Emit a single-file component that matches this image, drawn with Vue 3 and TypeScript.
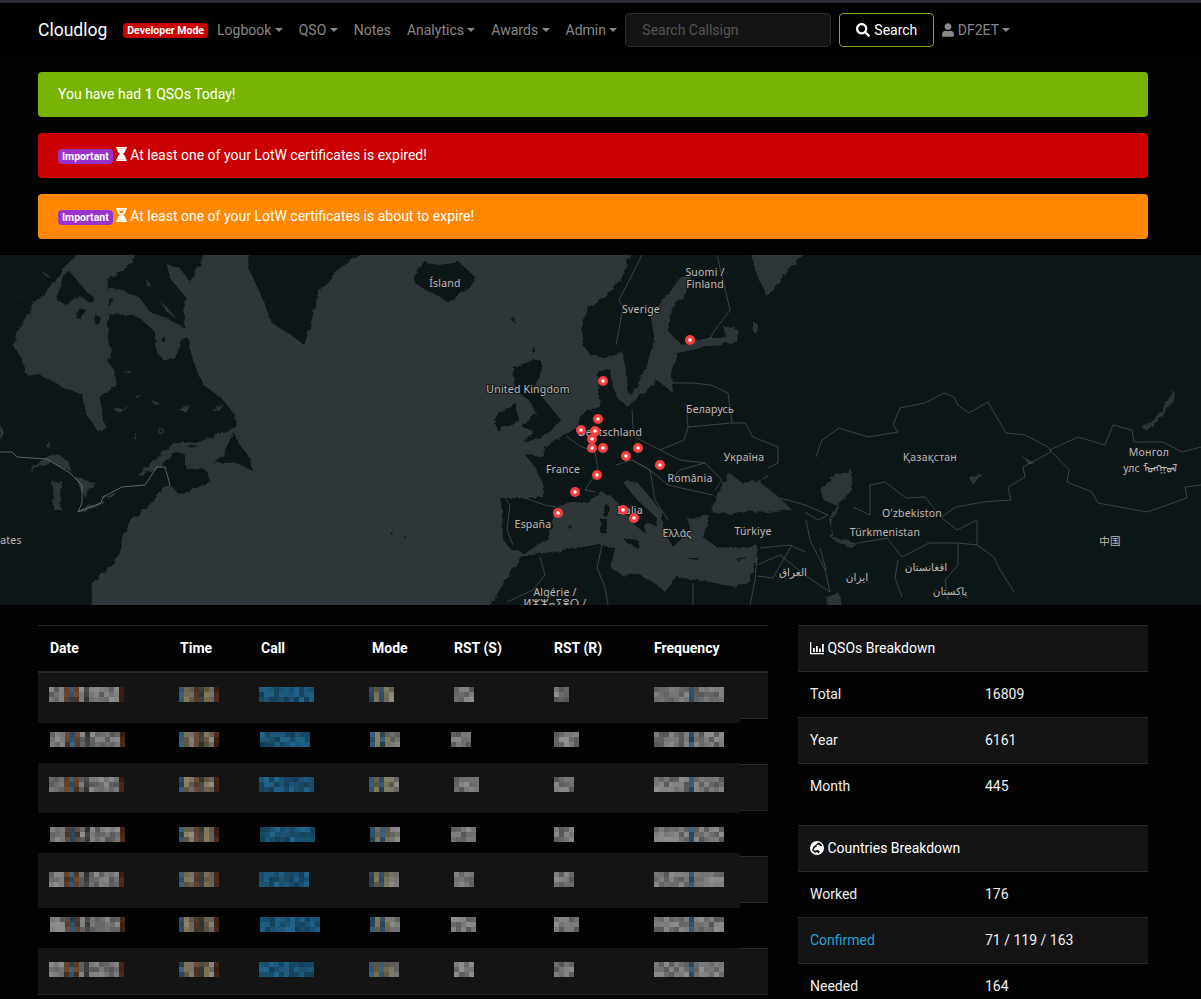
<script setup lang="ts">
type Tint = 'g' | 'd' | 'r' | 'u' | 'o' | 'x' | 'c';

interface Cell {
  tints: string;
  count: number;
}

interface LogRow {
  top: number;
  band?: [number, number];
  cells: Cell[];
}

const colours: Record<Tint, [number, number, number]> = {
  g: [124, 124, 124],
  d: [64, 66, 70],
  r: [100, 68, 46],
  u: [50, 88, 118],
  o: [126, 116, 82],
  x: [72, 38, 24],
  c: [28, 88, 122],
};

const dateT = 'gggrurgdggggggx';
const timeT = 'uogrdogx';
const callT = 'ccccccccccccc';
const modeT = 'uouogg';
const rstT = 'ggggg';
const freqT = 'gggggggugggggg';

function cells(call: number, mode: number, s: number, r: number, time = 8): Cell[] {
  return [
    { tints: dateT, count: 15 },
    { tints: timeT, count: time },
    { tints: callT, count: call },
    { tints: modeT, count: mode },
    { tints: rstT, count: s },
    { tints: rstT, count: r },
    { tints: freqT, count: 14 },
  ];
}

const rows: LogRow[] = [
  { top: 14, band: [0, 50], cells: cells(11, 5, 4, 3) },
  { top: 13, cells: cells(10, 6, 4, 5) },
  { top: 12, band: [-2, 50], cells: cells(11, 6, 5, 4) },
  { top: 16, cells: cells(11, 6, 5, 4) },
  { top: 15, band: [-4, 55], cells: cells(10, 6, 4, 4) },
  { top: 14, cells: cells(12, 6, 5, 5) },
  { top: 13, band: [-1, 46], cells: cells(11, 6, 4, 4) },
];

const headers = ['Date', 'Time', 'Call', 'Mode', 'RST (S)', 'RST (R)', 'Frequency'];

function noise(a: number, b: number, c: number): number {
  const v = Math.sin(a * 127.1 + b * 311.7 + c * 74.7) * 43758.5453;
  return v - Math.floor(v);
}

function blockFill(cell: Cell, col: number, line: number, seed: number): string {
  const tint = (cell.tints[col] ?? 'g') as Tint;
  const base = colours[tint];
  const j = 0.7 + noise(col, line, seed) * 0.45;
  return `rgb(${Math.round(base[0] * j)},${Math.round(base[1] * j)},${Math.round(base[2] * j)})`;
}

const qsoStats = [
  { label: 'Total', value: '16809' },
  { label: 'Year', value: '6161' },
  { label: 'Month', value: '445' },
];

const countryStats = [
  { label: 'Worked', value: '176' },
  { label: 'Confirmed', value: '71 / 119 / 163', link: true },
  { label: 'Needed', value: '164' },
];

const navItems = [
  { label: 'Logbook', caret: true },
  { label: 'QSO', caret: true },
  { label: 'Notes', caret: false },
  { label: 'Analytics', caret: true },
  { label: 'Awards', caret: true },
  { label: 'Admin', caret: true },
];

const markers = [
  [690, 340], [603, 381], [598, 419], [581, 430], [595, 431], [592, 439], [592, 448], [603, 448],
  [626, 456], [638, 448], [660, 465], [597, 475], [575, 492], [558, 513], [623, 510], [634, 518],
];

const labels = [
  { t: 'Ísland', x: 445, y: 287 },
  { t: 'Suomi /', x: 705, y: 276 },
  { t: 'Finland', x: 705, y: 288 },
  { t: 'Sverige', x: 641, y: 313 },
  { t: 'United Kingdom', x: 528, y: 393 },
  { t: 'Беларусь', x: 710, y: 413 },
  { t: 'Deutschland', x: 610, y: 436 },
  { t: 'France', x: 563, y: 473 },
  { t: 'Україна', x: 744, y: 461 },
  { t: 'Қазақстан', x: 930, y: 461 },
  { t: 'Монгол', x: 1149, y: 456 },
  { t: 'улс ᠮᠤᠩᠭᠤᠯ', x: 1150, y: 472 },
  { t: 'România', x: 690, y: 482 },
  { t: "O'zbekiston", x: 912, y: 517 },
  { t: 'Türkmenistan', x: 885, y: 536 },
  { t: 'Türkiye', x: 753, y: 535 },
  { t: 'España', x: 533, y: 528 },
  { t: 'Italia', x: 630, y: 514 },
  { t: 'Ελλάς', x: 677, y: 537 },
  { t: 'ates', x: 11, y: 544 },
  { t: 'Algérie /', x: 555, y: 596 },
  { t: 'ⵍⵣⵣⴰⵢⴻⵔ /', x: 555, y: 607 },
  { t: 'العراق', x: 793, y: 576 },
  { t: 'ایران', x: 857, y: 581 },
  { t: 'افغانستان', x: 926, y: 571 },
  { t: 'پاکستان', x: 950, y: 595 },
  { t: '中国', x: 1110, y: 545 },
];

// europe, asia and north africa in one outline, screen coordinates
const eurasia =
  '632,235 630,255 622,278 606,295 590,306 582,322 583,345 597,365 598,380 600,407 587,410 580,417 578,427 568,433 563,435 553,443 545,448 543,457 525,455 535,467 543,483 543,497 525,498 500,498 502,510 503,540 512,550 522,552 530,550 548,538 553,522 558,507 570,502 587,502 600,492 610,495 623,508 633,523 647,535 645,527 648,523 656,525 657,518 637,500 622,481 637,482 650,497 663,513 663,530 673,547 680,540 690,530 687,518 703,517 710,515 707,525 703,537 717,547 733,548 747,548 757,545 757,555 750,580 737,587 710,582 677,577 665,592 657,585 637,573 622,575 610,567 615,548 600,545 587,545 562,550 533,555 522,555 517,563 490,605 480,630 1230,630 1230,235';

const seas = [
  // baltic and bothnia
  '678,278 690,275 686,293 673,305 667,330 682,345 707,338 727,338 734,325 736,342 711,345 692,350 677,353 671,373 673,393 657,380 650,387 627,407 619,397 634,392 646,367 654,340 650,317 663,300',
  // kattegat and skagerrak
  '590,355 607,358 622,352 627,375 628,390 630,405 619,400 612,385 610,368 600,372 594,382 575,375',
  // white sea
  '745,235 803,235 803,255 780,280 767,297 755,270',
  // ladoga, onega
  '722,325 738,330 737,342 728,340',
  '752,320 758,325 757,335 752,330',
  // black sea
  '712,507 719,490 730,473 742,483 761,480 772,470 761,483 780,498 792,510 768,513 745,511 730,514 713,512',
  // caspian
  '820,490 830,477 852,470 852,490 839,503 830,520 830,537 845,540 858,543 852,548 833,540 830,527 839,507 824,500',
  // baikal, aral, balkhash
  '1142,428 1160,413 1174,390 1176,397 1162,417 1147,430',
  '969,477 982,473 973,485',
  '1023,457 1030,460 1035,465 1028,464',
  // persian gulf
  '826,597 839,593 843,610 830,610',
];

const islands = [
  // greenland
  '247,235 360,235 360,255 337,270 318,293 310,327 304,345 291,335 272,323 260,293 249,270',
  // iceland
  '413,275 425,263 440,265 459,262 475,277 471,287 448,302 432,293 417,285',
  // britain, ireland
  '526,363 541,360 541,373 534,387 547,403 561,420 551,433 524,443 532,430 522,427 536,413 529,400 515,390 513,367',
  '498,413 516,403 518,420 498,430 494,423',
  // corsica, sardinia, sicily, crete, cyprus, balearics
  '605,502 610,508 607,517 603,515',
  '600,518 607,518 607,533 600,532',
  '623,538 638,540 637,548 627,543',
  '687,558 700,558 697,560',
  '737,560 747,557 740,562',
  '567,527 572,525 570,529',
  // faroes, shetland, azores specks
  '512,320 515,316 514,323',
  '533,352 535,348 535,354',
  '390,533 393,532 392,535',
  '404,537 406,536 405,539',
];

// north america, read off at 3x: x = screen x * 3, y = (screen y - 255) * 3
const america =
  '-60,-60 640,-60 610,0 605,20 570,80 540,40 500,25 510,70 560,130 550,165 555,215 580,320 610,390 665,430 705,480 710,515 600,565 560,610 620,650 630,680 540,720 505,685 453,745 396,795 367,845 362,885 344,925 275,985 275,1100 -60,1100';

const americaWater = [
  // hudson bay, foxe basin and the strait
  '40,270 60,215 110,135 165,80 185,45 240,-10 410,-10 390,30 325,75 322,100 360,105 420,130 450,170 500,190 548,215 590,215 590,250 550,250 525,310 495,320 470,290 465,230 420,190 390,180 325,178 322,240 335,290 318,315 345,350 350,390 300,430 315,515 295,530 255,470 250,420 195,400 110,355 78,360 65,310',
  // gulf of st lawrence
  '710,515 670,530 600,560 520,565 470,610 410,665 470,640 530,590 555,600 555,640 610,640 640,640 700,650 770,650 730,540',
  // lakes
  '85,650 140,605 170,595 205,620 215,650 150,620',
  '155,685 184,675 184,765 161,765',
  '224,665 287,685 252,725',
  '235,765 310,735 310,745 247,775',
  '298,730 356,710 344,725',
  '135,570 150,560 150,580',
  '0,510 8,530 0,555',
  '370,355 395,345 385,355',
  '400,425 425,420 412,428',
  '340,465 390,455 360,470',
  '455,435 480,445 465,450',
  '535,465 570,445 555,470',
  '630,465 680,445 650,465',
  '395,555 410,530 405,550',
  '120,45 155,68 140,65',
  '15,110 100,140 60,125',
  '440,75 455,95 435,90',
  '480,135 530,190 500,170',
];

const americaLand = [
  // newfoundland
  '700,530 670,600 640,625 700,620 755,645 750,610 715,565',
  // nova scotia fringe, anticosti
  '555,570 600,572 575,578',
  // islands in the bay
  '190,60 210,50 260,110 285,130 270,140 240,125 200,150 170,135',
  '225,185 240,160 258,165 240,190',
  '285,205 290,180 303,190 295,210',
  '320,150 335,130 345,140',
  '325,75 345,65 400,100 360,105 322,100',
  '480,255 495,245 495,262',
];

const borders = [
  // scandinavia
  '642,255 631,277 619,300 623,307 616,345',
  '717,255 730,310 715,330 709,340',
  // eastern europe
  '672,383 692,383 711,385 728,393 732,423 745,423 753,437 778,447 778,463 768,468',
  '686,403 688,427 684,440 660,450 635,437 633,427 632,410',
  '688,427 732,423',
  '660,450 680,460 705,463 722,480 715,490',
  '666,485 680,470 705,463',
  '650,470 668,485 690,490 713,495',
  '632,460 650,470 655,500 668,520',
  '616,465 632,460 650,470',
  // france, iberia, benelux
  '566,436 580,446 595,452 598,470 585,490 596,492',
  '525,498 545,505 557,507',
  '505,498 510,505 507,530 513,545',
  // kazakhstan
  '816,457 822,440 839,428 868,437 898,432 893,425 900,408 925,403 944,393 954,397 958,405 969,413 988,402 1006,433 1025,435 1048,447',
  '1048,447 1051,452 1023,467 1025,477 1008,487 1011,500 983,502 956,507 941,517 925,497 906,498 885,482 870,485 870,515 853,507',
  // mongolia
  '1050,450 1078,437 1105,445 1113,425 1132,430 1134,442 1163,442 1182,452 1201,447',
  '1050,450 1069,470 1067,482 1092,492 1098,503 1147,512 1187,498 1185,487 1201,485',
  // central asia, iran, caucasus
  '858,543 887,538 902,557 929,543 958,543 977,545 994,557 1000,570 1014,592',
  '898,560 895,578 902,597',
  '958,543 958,565 945,580 948,600',
  '941,517 957,530 977,520 977,545',
  '780,498 805,505 828,515 818,520 805,512',
  '806,520 810,540 825,570 830,592 805,575 780,555 757,565',
  '820,548 826,570',
  '760,548 790,545 805,552',
  // north africa and levant
  '540,557 545,575 533,590 507,602',
  '602,545 597,568 605,587 608,605',
  '693,583 693,605',
  '757,557 755,580 750,605',
  '757,576 773,578 792,545',
];

// us / canada line, brighter than the others
const usBorder =
  '0,452 12,452 17,457 47,459 70,473 82,485 82,503 78,512 101,503 103,497 122,487 145,485 157,467 165,467 170,485';
</script>

<template>
  <div class="page">
    <div class="topline"></div>
    <nav class="navbar">
      <span class="brand">Cloudlog</span>
      <span class="dev-badge">Developer Mode</span>
      <a v-for="item in navItems" :key="item.label" class="nav-link">
        {{ item.label }}<i v-if="item.caret" class="caret"></i>
      </a>
      <input class="search-input" placeholder="Search Callsign" />
      <button class="search-btn">
        <svg class="ico-search" viewBox="0 0 512 512">
          <path
            d="M505 442.7L405.3 343c-4.5-4.5-10.6-7-17-7H372c27.6-35.3 44-79.7 44-128C416 93.1 322.9 0 208 0S0 93.1 0 208s93.1 208 208 208c48.3 0 92.7-16.4 128-44v16.3c0 6.4 2.5 12.5 7 17l99.7 99.7c9.4 9.4 24.6 9.4 33.9 0l28.3-28.3c9.4-9.4 9.4-24.6.1-34zM208 336c-70.7 0-128-57.2-128-128 0-70.7 57.2-128 128-128 70.7 0 128 57.2 128 128 0 70.7-57.2 128-128 128z"
          />
        </svg>
        Search
      </button>
      <a class="nav-link user-link">
        <svg class="ico-user" viewBox="0 0 448 512">
          <path
            d="M224 256c70.7 0 128-57.3 128-128S294.7 0 224 0 96 57.3 96 128s57.3 128 128 128zm89.6 32h-16.7c-22.2 10.2-46.9 16-72.9 16s-50.6-5.8-72.9-16h-16.7C60.2 288 0 348.2 0 422.4V464c0 26.5 21.5 48 48 48h352c26.5 0 48-21.5 48-48v-41.6c0-74.2-60.2-134.4-134.4-134.4z"
          />
        </svg>
        DF2ET<i class="caret"></i>
      </a>
    </nav>

    <section class="alerts">
      <div class="alert green">You have had <b>1</b> QSOs Today!</div>
      <div class="alert red">
        <span class="imp">Important</span>
        <svg class="ico-glass" viewBox="0 0 12 16">
          <path d="M0 0h12v2H0zM0 14h12v2H0z" />
          <path d="M1 2h10c0 3-1.6 5-3.6 6C9.4 9 11 11 11 14H1c0-3 1.6-5 3.6-6C2.6 7 1 5 1 2z" />
        </svg>
        At least one of your LotW certificates is expired!
      </div>
      <div class="alert orange">
        <span class="imp">Important</span>
        <svg class="ico-glass" viewBox="0 0 12 16">
          <path d="M0 0h12v2H0zM0 14h12v2H0z" />
          <path
            fill-rule="evenodd"
            d="M1 2h10c0 3-1.6 5-3.6 6C9.4 9 11 11 11 14H1c0-3 1.6-5 3.6-6C2.6 7 1 5 1 2zM3 3.2c.3 1.2 1 2.2 2 2.9h2c1-.7 1.7-1.700 2-2.900z"
          />
        </svg>
        At least one of your LotW certificates is about to expire!
      </div>
    </section>

    <svg class="map" viewBox="0 255 1201 350" width="1201" height="350">
      <defs>
        <filter
          id="rough"
          filterUnits="userSpaceOnUse"
          x="-40"
          y="225"
          width="1281"
          height="420"
        >
          <feTurbulence type="fractalNoise" baseFrequency="0.14" numOctaves="3" seed="4" />
          <feDisplacementMap in="SourceGraphic" scale="5" />
        </filter>
      </defs>
      <rect x="0" y="255" width="1201" height="350" class="water" />
      <g filter="url(#rough)">
        <g transform="translate(0 255) scale(0.3333)">
          <polygon :points="america" class="land" />
          <polygon v-for="p in americaWater" :key="p" :points="p" class="water" />
          <polygon v-for="p in americaLand" :key="p" :points="p" class="land" />
        </g>
        <polygon :points="eurasia" class="land" />
        <polygon v-for="p in seas" :key="p" :points="p" class="water" />
        <polygon v-for="p in islands" :key="p" :points="p" class="land" />
      </g>
      <polyline :points="usBorder" class="border bright" />
      <circle cx="161" cy="431" r="2.300" class="border" />
      <polyline v-for="p in borders" :key="p" :points="p" class="border" />
      <text
        v-for="l in labels"
        :key="l.t"
        :x="l.x"
        :y="l.y"
        class="map-label"
        text-anchor="middle"
      >{{ l.t }}</text>
      <g v-for="(m, i) in markers" :key="i">
        <circle :cx="m[0]" :cy="m[1]" r="5" fill="#f33f3f" />
        <circle :cx="m[0]" :cy="m[1]" r="1.800" fill="#fff" />
      </g>
    </svg>

    <main class="content">
      <div class="log">
        <div class="log-head">
          <div v-for="h in headers" :key="h" class="log-cell">{{ h }}</div>
        </div>
        <div
          v-for="(row, r) in rows"
          :key="r"
          class="log-row"
          :class="{ striped: r % 2 === 0 }"
        >
          <div
            v-if="row.band"
            class="band"
            :style="{ top: row.band[0] + 'px', height: row.band[1] + 'px' }"
          ></div>
          <div
            v-for="(cell, c) in row.cells"
            :key="c"
            class="log-cell mosaic-cell"
            :style="{ paddingTop: row.top + 'px' }"
          >
            <svg :width="cell.count * 5" height="15" class="mosaic">
              <template v-for="col in cell.count" :key="col">
                <rect
                  v-for="line in 3"
                  :key="line"
                  :x="(col - 1) * 5"
                  :y="(line - 1) * 5"
                  width="5"
                  height="5"
                  :fill="blockFill(cell, col - 1, line, r * 7 + c)"
                />
              </template>
            </svg>
          </div>
        </div>
      </div>

      <aside class="side">
        <div class="stat-table">
          <div class="stat-head">
            <svg class="ico-head" viewBox="0 0 14 14">
              <path d="M0 1h1.300v11H14v1.300H0z" />
              <path d="M3 7h1.800v4H3zM6 5h1.800v6H6zM9 7.500h1.800V11H9zM12 3h1.800v8H12z" />
            </svg>
            QSOs Breakdown
          </div>
          <div v-for="s in qsoStats" :key="s.label" class="stat-row">
            <span class="stat-label">{{ s.label }}</span>
            <span>{{ s.value }}</span>
          </div>
        </div>
        <div class="stat-table">
          <div class="stat-head">
            <svg class="ico-head" viewBox="0 0 14 14">
              <circle cx="7" cy="7" r="7" fill="#fff" />
              <path
                d="M8 1.500c2 .2 3.600 1.500 4.300 3.300L10 5 8.500 3.500 6.500 4l.5 1.500L5 6.500 3.500 9l2 .5 2.500-.5 2 1.500-1.500 2L7 11 5 12 2.200 9.500 3 6 5 4.500z"
                fill="#141414"
              />
            </svg>
            Countries Breakdown
          </div>
          <div v-for="s in countryStats" :key="s.label" class="stat-row">
            <span class="stat-label" :class="{ link: s.link }">{{ s.label }}</span>
            <span>{{ s.value }}</span>
          </div>
        </div>
      </aside>
    </main>
  </div>
</template>

<style scoped>
.page {
  height: 999px;
  overflow: hidden;
  background: #030303;
  color: #f0f0f0;
  font-family: Roboto, "Liberation Sans", sans-serif;
  font-size: 14px;
  line-height: 21px;
}

.topline {
  height: 3px;
  background: #2b2b32;
}

.navbar {
  height: 54px;
  padding: 0 38px;
  display: flex;
  align-items: center;
  background: #000;
}

.brand {
  font-size: 17.5px;
  color: #fff;
  margin-right: 16px;
}

.dev-badge {
  background: #cc0000;
  color: #fff;
  font-size: 10.5px;
  font-weight: 700;
  line-height: 15px;
  padding: 0 4px;
  border-radius: 4px;
  white-space: nowrap;
  margin-right: 1px;
}

.nav-link {
  padding: 0 8px;
  color: #888;
  white-space: nowrap;
}

.caret {
  display: inline-block;
  margin-left: 3.400px;
  vertical-align: 3px;
  border-top: 4px solid #888;
  border-left: 4px solid transparent;
  border-right: 4px solid transparent;
}

.search-input {
  width: 206px;
  height: 34px;
  box-sizing: border-box;
  background: #141414;
  border: 1px solid #2a2a2a;
  border-radius: 4px;
  padding: 0 16px;
  font: inherit;
  color: #fff;
}

.search-input::placeholder {
  color: #555;
}

.search-btn {
  width: 95px;
  height: 34px;
  margin: 0 0 0 8px;
  padding: 0;
  background: #000;
  border: 1px solid #77b300;
  border-radius: 4px;
  color: #fff;
  font: inherit;
  display: flex;
  align-items: center;
  justify-content: center;
  gap: 4px;
}

.ico-search {
  width: 14px;
  height: 14px;
  fill: #fff;
}

.ico-user {
  width: 12px;
  height: 14px;
  fill: #888;
  vertical-align: -2px;
}

.alerts {
  padding: 15px 53px 16px 38px;
  display: flex;
  flex-direction: column;
  gap: 16px;
}

.alert {
  height: 45px;
  box-sizing: border-box;
  padding: 12px 20px;
  border-radius: 4px;
  color: #fff;
  white-space: nowrap;
}

.green {
  background: #77b300;
}

.red {
  background: #cc0000;
}

.orange {
  background: #ff8800;
}

.imp {
  display: inline-block;
  background: #9933cc;
  color: #fff;
  font-size: 10.5px;
  font-weight: 700;
  line-height: 15px;
  padding: 0 4px;
  border-radius: 4px;
  vertical-align: 0;
}

.ico-glass {
  width: 11px;
  height: 14px;
  fill: #fff;
  vertical-align: -1px;
  margin-left: 3px;
}

.map {
  display: block;
}

.land {
  fill: #111313;
}

.water {
  fill: #2e3639;
}

.border {
  fill: none;
  stroke: #505557;
  stroke-width: 0.7;
}

.bright {
  stroke: #80878a;
}

.map-label {
  font-family: "Noto Sans", "DejaVu Sans", "Noto Sans CJK SC", sans-serif;
  font-size: 10.5px;
  letter-spacing: 0.2px;
  fill: #b8b8b8;
  stroke: #151717;
  stroke-width: 2px;
  paint-order: stroke;
}

.content {
  padding: 20px 53px 0 38px;
  display: flex;
  gap: 30px;
}

.log {
  width: 730px;
  flex: none;
}

.log-head,
.log-row {
  display: grid;
  grid-template-columns: 130px 81px 111px 82px 100px 100px 126px;
}

.log-head {
  height: 48px;
  box-sizing: border-box;
  border-top: 1px solid #282828;
  border-bottom: 2px solid #282828;
  font-weight: 700;
  color: #fff;
  align-items: start;
  padding-top: 12px;
}

.log-cell {
  padding-left: 12px;
}

.log-row {
  position: relative;
  height: 46px;
  box-sizing: border-box;
  border-bottom: 1px solid #282828;
}

.log-row.striped {
  background: #141414;
}

.band {
  position: absolute;
  left: 0;
  width: 702px;
  background: #141414;
}

.mosaic-cell {
  position: relative;
}

.mosaic-cell:nth-of-type(2) {
  padding-left: 11px;
}

.mosaic-cell:nth-of-type(3) {
  padding-left: 11px;
}

.mosaic-cell:nth-of-type(4) {
  padding-left: 10px;
}

.mosaic-cell:nth-of-type(5) {
  padding-left: 9px;
}

.mosaic {
  display: block;
}

.side {
  width: 350px;
  flex: none;
  display: flex;
  flex-direction: column;
  gap: 16px;
}

.stat-head {
  height: 46px;
  box-sizing: border-box;
  border-top: 1px solid #282828;
  padding: 12px;
  background: #141414;
  color: #fff;
}

.ico-head {
  width: 14px;
  height: 14px;
  fill: #fff;
  vertical-align: -2px;
}

.stat-row {
  height: 46px;
  box-sizing: border-box;
  border-top: 1px solid #282828;
  padding: 12px;
  display: grid;
  grid-template-columns: 175px 1fr;
  color: #f0f0f0;
}

.stat-row:nth-of-type(odd) {
  background: #141414;
}

.link {
  color: #2a9fd6;
}
</style>
